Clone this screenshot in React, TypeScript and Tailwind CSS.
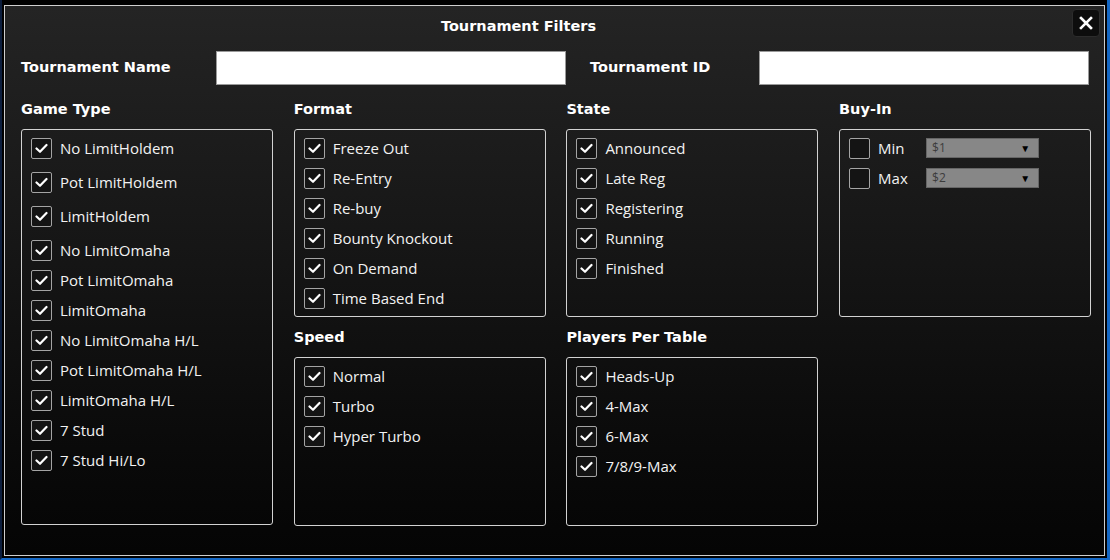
import React from 'react';

type Item = { label: string; checked?: boolean; tall?: boolean };

const gameTypes: Item[] = [
  { label: 'No LimitHoldem', tall: true },
  { label: 'Pot LimitHoldem', tall: true },
  { label: 'LimitHoldem', tall: true },
  { label: 'No LimitOmaha' },
  { label: 'Pot LimitOmaha' },
  { label: 'LimitOmaha' },
  { label: 'No LimitOmaha H/L' },
  { label: 'Pot LimitOmaha H/L' },
  { label: 'LimitOmaha H/L' },
  { label: '7 Stud' },
  { label: '7 Stud Hi/Lo' },
];

const formats: Item[] = [
  { label: 'Freeze Out' },
  { label: 'Re-Entry' },
  { label: 'Re-buy' },
  { label: 'Bounty Knockout' },
  { label: 'On Demand' },
  { label: 'Time Based End' },
];

const states: Item[] = [
  { label: 'Announced' },
  { label: 'Late Reg' },
  { label: 'Registering' },
  { label: 'Running' },
  { label: 'Finished' },
];

const speeds: Item[] = [{ label: 'Normal' }, { label: 'Turbo' }, { label: 'Hyper Turbo' }];

const players: Item[] = [
  { label: 'Heads-Up' },
  { label: '4-Max' },
  { label: '6-Max' },
  { label: '7/8/9-Max' },
];

const headFont = { fontFamily: '"DejaVu Sans", Verdana, sans-serif' };
const bodyFont = { fontFamily: '"Open Sans", "Noto Sans", sans-serif' };

function CheckBox({ checked = true }: { checked?: boolean }) {
  return (
    <div className="w-[21px] h-[21px] shrink-0 border border-[#a4a4a4] rounded-[2px] bg-[#141414] flex items-center justify-center">
      {checked && (
        <svg width="13" height="11" viewBox="0 0 13 11">
          <path d="M1.5 5.5 L5 8.8 L11.5 2" fill="none" stroke="#ffffff" strokeWidth="2.2" strokeLinecap="round" strokeLinejoin="round" />
        </svg>
      )}
    </div>
  );
}

function CheckRow({ item }: { item: Item }) {
  return (
    <div className={`flex items-center h-[30px] ${item.tall ? 'mb-[4px]' : ''}`}>
      <CheckBox checked={item.checked ?? true} />
      <span className="ml-[8px] text-[15px] text-[#f2f2f2] leading-none" style={bodyFont}>
        {item.label}
      </span>
    </div>
  );
}

function Header({ children, top = 14 }: { children: React.ReactNode; top?: number }) {
  return (
    <div
      className={`${top === 14 ? 'pt-[14px] pb-[10px]' : 'pt-[10px] pb-[10px]'} text-[14.5px] font-bold text-white leading-[20px]`}
      style={headFont}
    >
      {children}
    </div>
  );
}

function Box({ items, h }: { items: Item[]; h: string }) {
  return (
    <div className={`${h} border border-[#d2d2d2] rounded-[3px] pl-[9px] pt-[3px]`}>
      {items.map((it) => (
        <CheckRow key={it.label} item={it} />
      ))}
    </div>
  );
}

function Select({ value }: { value: string }) {
  return (
    <div className="w-[113px] h-[20px] bg-[#878787] border border-[#666] flex items-center justify-between pl-[5px] pr-[8px]">
      <span className="text-[12px] text-[#3c3c3c]" style={bodyFont}>
        {value}
      </span>
      <span className="text-[10px] text-black leading-none">▼</span>
    </div>
  );
}

function BuyRow({ label, value }: { label: string; value: string }) {
  return (
    <div className="flex items-center h-[30px]">
      <CheckBox checked={false} />
      <span className="ml-[8px] w-[48px] text-[15px] text-[#f2f2f2]" style={bodyFont}>
        {label}
      </span>
      <Select value={value} />
    </div>
  );
}

export default function App() {
  return (
    <div className="w-[1110px] h-[560px] bg-black border-l-[2px] border-l-[#0b1d3d] border-r-[3px] border-r-[#1467c4] border-b-[2px] border-b-[#1467c4] pt-[5px] pl-[2px] overflow-hidden">
      <div className="relative w-[1101px] h-[551px] border border-[#cfcfcf] bg-gradient-to-b from-[#242424] via-[#141414] to-[#050505]">
        {/* Title */}
        <div className="h-[42px] flex items-center justify-center pr-[72px]">
          <span className="text-[14.5px] font-bold text-white" style={headFont}>
            Tournament Filters
          </span>
        </div>
        <button className="absolute top-[3px] right-[4px] w-[28px] h-[28px] rounded-[4px] bg-[#0d0d0d] border border-[#2c2c2c] flex items-center justify-center">
          <svg width="14" height="14" viewBox="0 0 14 14">
            <path d="M2 2 L12 12 M12 2 L2 12" stroke="#ffffff" strokeWidth="2.6" strokeLinecap="square" />
          </svg>
        </button>

        <div className="pl-[16px] pr-[14px] pt-[3px]">
          {/* Name / ID row */}
          <div className="flex items-center h-[34px]">
            <div className="w-[195px] text-[14.5px] font-bold text-white" style={headFont}>
              Tournament Name
            </div>
            <div className="w-[350px] h-[34px] bg-white border border-[#9a9a9a]" />
            <div className="ml-[24px] w-[169px] text-[14.5px] font-bold text-white" style={headFont}>
              Tournament ID
            </div>
            <div className="w-[330px] h-[34px] bg-white border border-[#9a9a9a]" />
          </div>

          {/* Columns */}
          <div className="grid grid-cols-[252px_252px_252px_252px] gap-x-[20.7px]">
            <div>
              <Header>Game Type</Header>
              <Box items={gameTypes} h="h-[396px]" />
            </div>
            <div>
              <Header>Format</Header>
              <Box items={formats} h="h-[188px]" />
              <Header top={10}>Speed</Header>
              <Box items={speeds} h="h-[169px]" />
            </div>
            <div>
              <Header>State</Header>
              <Box items={states} h="h-[188px]" />
              <Header top={10}>Players Per Table</Header>
              <Box items={players} h="h-[169px]" />
            </div>
            <div>
              <Header>Buy-In</Header>
              <div className="h-[188px] border border-[#d2d2d2] rounded-[3px] pl-[9px] pt-[3px]">
                <BuyRow label="Min" value="$1" />
                <BuyRow label="Max" value="$2" />
              </div>
            </div>
          </div>
        </div>
      </div>
    </div>
  );
}
